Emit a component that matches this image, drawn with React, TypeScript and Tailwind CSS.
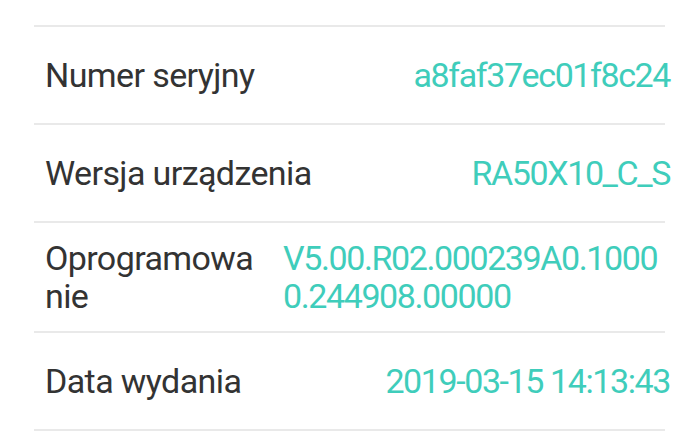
const rows = [
  { label: "Numer seryjny", value: "a8faf37ec01f8c24", tall: false },
  { label: "Wersja urządzenia", value: "RA50X10_C_S", tall: false },
  { label: "Oprogramowanie", value: "V5.00.R02.000239A0.10000.244908.00000", tall: true },
  { label: "Data wydania", value: "2019-03-15 14:13:43", tall: false },
];

function Divider() {
  return <div className="ml-[34px] h-[2px] w-[631px] bg-[#e9e9e9]" />;
}

export default function App() {
  return (
    <div className="h-[441px] w-[700px] overflow-hidden bg-white pt-[25px] font-['Roboto',sans-serif]">
      <Divider />
      {rows.map((row) => (
        <div key={row.label}>
          <div
            className={`flex items-center justify-between gap-4 pl-[45px] pr-[30px] text-[34px] leading-[38px] ${
              row.tall ? "h-[108px]" : "h-[96px]"
            }`}
          >
            <span
              className={`break-all tracking-[-0.6px] text-[#333333] ${
                row.tall ? "w-[212px] shrink-0" : "whitespace-nowrap"
              }`}
            >
              {row.label}
            </span>
            <span className="max-w-[387px] break-all text-left tracking-[-1.4px] text-[#3fcdbb]">
              {row.value}
            </span>
          </div>
          <Divider />
        </div>
      ))}
    </div>
  );
}
